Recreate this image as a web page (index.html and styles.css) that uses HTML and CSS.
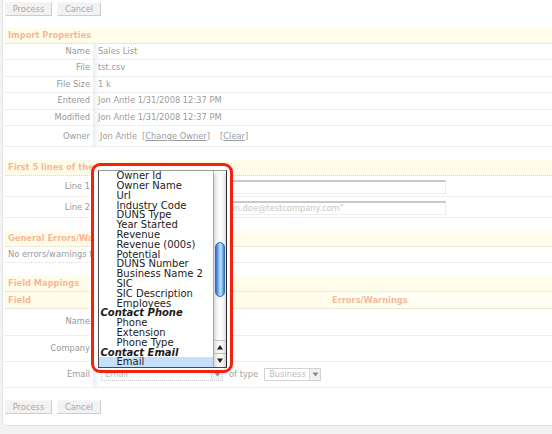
FILE: index.html
```html
<!DOCTYPE html>
<html>
<head>
<meta charset="utf-8">
<link rel="stylesheet" href="styles.css">
</head>
<body>
<div class="panel">
  <div class="btns">
    <button class="btn btn-process">Process</button>
    <button class="btn btn-cancel">Cancel</button>
  </div>

  <div class="sec sec-first">
    <div class="head">Import Properties</div>
    <div class="row"><div class="lbl">Name</div><div class="val">Sales List</div></div>
    <div class="row"><div class="lbl">File</div><div class="val">tst.csv</div></div>
    <div class="row"><div class="lbl">File Size</div><div class="val">1 k</div></div>
    <div class="row"><div class="lbl">Entered</div><div class="val">Jon Antle 1/31/2008 12:37 PM</div></div>
    <div class="row"><div class="lbl">Modified</div><div class="val">Jon Antle 1/31/2008 12:37 PM</div></div>
    <div class="row row-owner"><div class="lbl">Owner</div><div class="val val-owner"><span>Jon Antle</span><span class="lnk">[<u>Change Owner</u>]</span><span class="lnk lnk-clear">[<u>Clear</u>]</span></div></div>
  </div>

  <div class="sec">
    <div class="head">First 5 lines of the import file</div>
    <div class="row row-line"><div class="lbl">Line 1</div><div class="val"><div class="inp">"Name","Company","Email"</div></div></div>
    <div class="row row-line"><div class="lbl">Line 2</div><div class="val"><div class="inp">"John Doe","Test Company","john.doe@testcompany.com"</div></div></div>
  </div>

  <div class="sec">
    <div class="head">General Errors/Warnings</div>
    <div class="row row-msg">No errors/warnings found.</div>
  </div>

  <div class="sec">
    <div class="head">Field Mappings</div>
    <div class="colhead"><div class="ch ch-field">Field</div><div class="ch ch-map">Mapping</div><div class="ch ch-err">Errors/Warnings</div></div>
    <div class="row row-map"><div class="lbl">Name</div><div class="val val-map"><div class="sel sel-wide"><span class="sel-txt">Name</span><span class="sel-btn"><svg width="7" height="5" viewBox="0 0 7 5"><polygon points="0.5,0.5 6.5,0.5 3.5,4.5" fill="#8a8a8a"/></svg></span></div></div></div>
    <div class="row row-map"><div class="lbl">Company</div><div class="val val-map"><div class="sel sel-wide"><span class="sel-txt">Company</span><span class="sel-btn"><svg width="7" height="5" viewBox="0 0 7 5"><polygon points="0.5,0.5 6.5,0.5 3.5,4.5" fill="#8a8a8a"/></svg></span></div></div></div>
    <div class="row row-map"><div class="lbl">Email</div><div class="val val-map"><div class="sel sel-wide"><span class="sel-txt">Email</span><span class="sel-btn"><svg width="7" height="5" viewBox="0 0 7 5"><polygon points="0.5,0.5 6.5,0.5 3.5,4.5" fill="#8a8a8a"/></svg></span></div><span class="oftype">of type</span><div class="sel sel-type"><span class="sel-txt">Business</span><span class="sel-btn"><svg width="7" height="5" viewBox="0 0 7 5"><polygon points="0.5,0.5 6.5,0.5 3.5,4.5" fill="#8a8a8a"/></svg></span></div></div></div>
  </div>

  <div class="btns btns-bottom">
    <button class="btn btn-process">Process</button>
    <button class="btn btn-cancel">Cancel</button>
  </div>
</div>

<div class="callout">
  <div class="list">
    <div class="opts">
      <div class="opt">Owner Id</div>
      <div class="opt">Owner Name</div>
      <div class="opt">Url</div>
      <div class="opt">Industry Code</div>
      <div class="opt">DUNS Type</div>
      <div class="opt">Year Started</div>
      <div class="opt">Revenue</div>
      <div class="opt">Revenue (000s)</div>
      <div class="opt">Potential</div>
      <div class="opt">DUNS Number</div>
      <div class="opt">Business Name 2</div>
      <div class="opt">SIC</div>
      <div class="opt">SIC Description</div>
      <div class="opt">Employees</div>
      <div class="grp">Contact Phone</div>
      <div class="opt">Phone</div>
      <div class="opt">Extension</div>
      <div class="opt">Phone Type</div>
      <div class="grp">Contact Email</div>
      <div class="opt opt-sel">Email</div>
    </div>
    <div class="sb">
      <div class="sb-track"><div class="sb-thumb"></div></div>
      <div class="sb-arrow"><svg width="12" height="13" viewBox="0 0 12 13"><polygon points="3,8.5 6,4 9,8.5" fill="#1e1e1e"/></svg></div>
      <div class="sb-arrow"><svg width="12" height="13" viewBox="0 0 12 13"><polygon points="3,4.5 6,9 9,4.5" fill="#1e1e1e"/></svg></div>
    </div>
  </div>
</div>
</body>
</html>
```

FILE: styles.css
```css
* { box-sizing: border-box; }
html, body { margin: 0; padding: 0; }
body {
  width: 552px;
  height: 434px;
  overflow: hidden;
  position: relative;
  background: #f3f3f3;
  font-family: "DejaVu Sans", Verdana, sans-serif;
  font-size: 8.3px;
  color: #9a9a9a;
}
.panel {
  margin-left: 2px;
  width: 550px;
  background: #fff;
  border-left: 1px solid #e3e3e3;
  border-bottom: 1px solid #e3e3e3;
  border-bottom-left-radius: 5px;
  padding: 2px 0 11px 2px;
}
.btns { display: flex; gap: 5px; height: 14px; }
.btns-bottom { margin-top: 12px; }
.btn {
  font-family: "DejaVu Sans", Verdana, sans-serif;
  font-size: 8.3px;
  color: #a9a9a9;
  background: #f2f2f2;
  border: 1px solid #f7f7f7;
  border-right-color: #cdcdcd;
  border-bottom-color: #cdcdcd;
  padding: 0;
  height: 14px;
  line-height: 12px;
}
.btn-process { width: 47px; }
.btn-cancel { width: 44px; }

.sec { margin-top: 13px; }
.sec-first { margin-top: 12px; }
.head {
  height: 16px;
  background: #fffde9;
  border-bottom: 1px dotted #d9d6c4;
  color: #f8b899;
  font-weight: bold;
  line-height: 15px;
  padding-left: 3px;
  white-space: nowrap;
}
.row {
  display: grid;
  grid-template-columns: 88px 1fr;
  height: 16.4px;
  border-bottom: 1px dotted #dedede;
}
.lbl {
  text-align: right;
  padding-right: 3px;
  line-height: 15.4px;
  color: #999;
  white-space: nowrap;
}
.val {
  padding-left: 5px;
  line-height: 15.4px;
  color: #9c9c9c;
  white-space: nowrap;
  background: linear-gradient(to right, #e8eff8, #ffffff 7px);
}
.row-owner { height: 21.5px; }
.row-owner .lbl, .row-owner .val { line-height: 20.5px; }
.val-owner { display: flex; padding-left: 7px; }
.lnk { margin-left: 5px; }
.lnk-clear { margin-left: 10px; }

.row-line { height: 21px; }
.row-line .lbl { line-height: 20px; }
.row-line .val { display: flex; align-items: center; padding-left: 4px; }
.inp {
  width: 349px;
  height: 14px;
  border-top: 2px solid #c9c9c9;
  border-left: 1px solid #cfcfcf;
  border-right: 1px solid #ececec;
  border-bottom: 1px solid #efefef;
  padding-left: 4px;
  line-height: 11px;
  color: #c6c6c6;
  white-space: nowrap;
  overflow: hidden;
  margin-top: 1px;
}
.row-msg {
  display: block;
  height: 16px;
  line-height: 15px;
  padding-left: 3px;
  color: #9a9a9a;
}

.colhead {
  display: grid;
  grid-template-columns: 88px 238px 1fr;
  height: 17px;
  background: #fffde9;
  border-bottom: 1px dotted #d9d6c4;
  font-weight: bold;
  line-height: 16px;
}
.ch { padding-left: 3px; color: #f8b899; white-space: nowrap; }
.ch-map { color: #f48a5f; }
.ch-err { padding-left: 1px; background: #fffef3; }

.row-map { height: 26.3px; }
.row-map .lbl { line-height: 25.3px; }
.val-map { display: flex; align-items: center; padding-left: 8px; }
.sel {
  display: flex;
  height: 13px;
  line-height: 11px;
  color: #bdbdbd;
}
.sel-wide {
  width: 122px;
  border: 1px dotted #c9c9c9;
}
.sel-type {
  width: 57px;
  margin-left: 6px;
  border: 1px solid #d2d2d2;
}
.sel-txt { flex: 1; padding-left: 3px; white-space: nowrap; overflow: hidden; }
.sel-type .sel-txt { padding-left: 4px; }
.sel-btn {
  width: 11px;
  display: flex;
  align-items: center;
  justify-content: center;
  background: #f1f1f1;
  border-left: 1px solid #dadada;
}
.oftype { margin-left: 6px; color: #a3a3a3; }

/* dropdown callout */
.callout {
  position: absolute;
  left: 91px;
  top: 163px;
  width: 142px;
  height: 210px;
  border: 3px solid #f4210f;
  border-radius: 9px;
  background: #fff;
  z-index: 5;
}
.list {
  position: absolute;
  left: 4px;
  top: 4px;
  width: 129px;
  height: 198px;
  display: flex;
  background: #fff;
  border: 1px solid #4a4a4a;
  border-top-color: #9a9a9a;
  border-right-color: #2a2a2a;
}
.opts {
  flex: 1;
  padding-top: 0.2px;
  font-size: 10px;
  line-height: 9.8px;
  color: #1c1c1c;
  overflow: hidden;
}
.opt { height: 9.8px; padding-left: 17.5px; white-space: nowrap; }
.grp { height: 9.8px; padding-left: 1.5px; font-weight: bold; font-style: italic; white-space: nowrap; }
.opt-sel { background: #c6dffa; }
.sb {
  width: 13px;
  display: flex;
  flex-direction: column;
  border-left: 1px solid #a9a9a9;
}
.sb-track {
  flex: 1;
  background: linear-gradient(to right, #d6d6d6, #f4f4f4 25%, #ffffff 50%, #f2f2f2 80%, #d9d9d9);
  border-radius: 6px 6px 0 0;
  padding-top: 71px;
  display: flex;
  justify-content: center;
  border-bottom: 1px solid #c4c4c4;
}
.sb-thumb {
  width: 10px;
  height: 55px;
  border-radius: 5px;
  border: 1px solid #3b6db3;
  background: linear-gradient(to right, #2f6fcf, #78b1ee 30%, #c2e1fb 55%, #8cc1f1 75%, #3e7ed8);
}
.sb-arrow {
  height: 13px;
  display: flex;
  align-items: center;
  justify-content: center;
  background: linear-gradient(to right, #dcdcdc, #fafafa 40%, #f5f5f5 70%, #d4d4d4);
  border-bottom: 1px solid #bcbcbc;
}
.sb-arrow:last-child { border-bottom: none; }
```
